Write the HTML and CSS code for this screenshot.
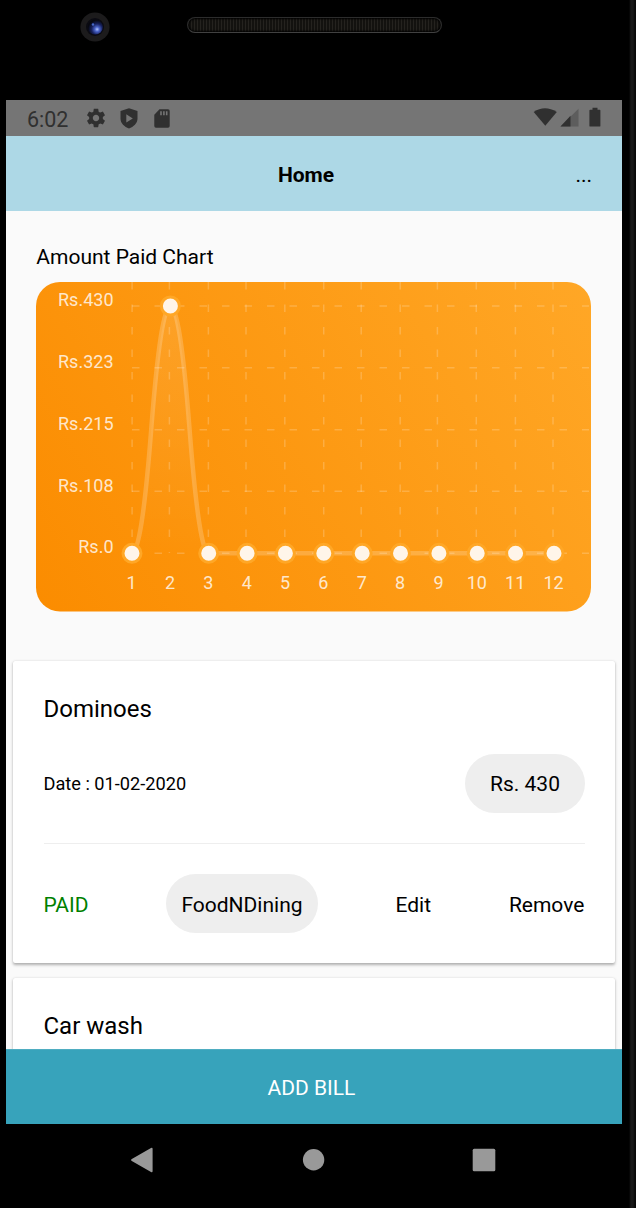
FILE: index.html
```html
<!DOCTYPE html>
<html lang="en">
<head>
<meta charset="utf-8">
<title>Home</title>
<link rel="stylesheet" href="styles.css">
</head>
<body>
<div class="device">
  <header class="bezel">
    <svg class="camera" width="30" height="30" viewBox="0 0 30 30">
      <defs><radialGradient id="lens" cx=".62" cy=".65" r=".6"><stop offset="0" stop-color="#b4c8ff"/><stop offset=".25" stop-color="#4a63c8"/><stop offset=".6" stop-color="#16205c"/><stop offset="1" stop-color="#07080f"/></radialGradient></defs>
      <circle cx="15" cy="15" r="14.6" fill="#1c1b1c"/>
      <circle cx="15" cy="15" r="9" fill="#0b0b12"/>
      <circle cx="15.3" cy="15" r="7.6" fill="url(#lens)"/>
      <circle cx="13" cy="12.5" r="1.2" fill="#4668c8"/>
    </svg>
    <div class="speaker"></div>
  </header>
  <main class="screen">
    <div class="status">
      <span class="clock">6:02</span>
      <svg class="gear" width="22" height="22" viewBox="0 0 24 24"><path d="M19.43 12.98c.04-.32.07-.64.07-.98s-.03-.66-.07-.98l2.11-1.65c.19-.15.24-.42.12-.64l-2-3.46c-.12-.22-.39-.3-.61-.22l-2.49 1c-.52-.4-1.08-.73-1.69-.98l-.38-2.65C14.46 2.18 14.25 2 14 2h-4c-.25 0-.46.18-.49.42l-.38 2.65c-.61.25-1.17.59-1.69.98l-2.49-1c-.23-.09-.49 0-.61.22l-2 3.46c-.13.22-.07.49.12.64l2.11 1.65c-.04.32-.07.65-.07.98s.03.66.07.98l-2.11 1.65c-.19.15-.24.42-.12.64l2 3.46c.12.22.39.3.61.22l2.49-1c.52.4 1.08.73 1.69.98l.38 2.65c.03.24.24.42.49.42h4c.25 0 .46-.18.49-.42l.38-2.65c.61-.25 1.17-.59 1.69-.98l2.49 1c.23.09.49 0 .61-.22l2-3.46c.12-.22.07-.49-.12-.64l-2.11-1.65zM12 15.5c-1.93 0-3.5-1.57-3.5-3.5s1.57-3.5 3.5-3.5 3.5 1.57 3.5 3.5-1.57 3.5-3.5 3.5z"/></svg>
      <svg class="shield" width="18" height="21" viewBox="0 0 18 21"><path fill-rule="evenodd" d="M9 .3 17.5 3v7.8c0 4.400-3.900 8-8.500 9.800C4.400 18.800.5 15.200.5 10.800V3zM6.300 6.300v8.200l6.500-4.100z"/></svg>
      <svg class="card-icon" width="16" height="19" viewBox="0 0 16 19"><path fill-rule="evenodd" d="M5.500.3H14a1.700 1.700 0 0 1 1.700 1.700v15A1.700 1.700 0 0 1 14 18.700H2A1.700 1.700 0 0 1 .3 17V5.700zM6.200 2.200v4h1.600v-4zm2.900 0v4h1.600v-4zm2.800 0v4h1.600v-4z"/></svg>
      <svg class="signals" width="69" height="22" viewBox="0 0 69 22">
        <path d="M.7 5Q11.700-2.500 23.800 5L12.300 18.700z"/>
        <path opacity=".35" d="M45.500 1.700v17.800h-18z"/><path d="M37.500 8.800v10.700h-10z"/>
        <path d="M59.500.7h5v2h2.100q.8 0 .8.800v15.200q0 .9-.8.900h-9.400q-.8 0-.8-.9V3.500q0-.8.8-.8h2.300z"/>
      </svg>
    </div>
    <nav class="appbar"><span class="title">Home</span><span class="more">...</span></nav>
    <div class="content">
      <h2 class="chart-title">Amount Paid Chart</h2>
      <svg class="chart" width="555" height="330" viewBox="36 282 555 330">
        <defs>
          <linearGradient id="bg" gradientUnits="userSpaceOnUse" x1="36" y1="612" x2="591" y2="282"><stop offset="0" stop-color="#fb8c00"/><stop offset="1" stop-color="#ffa726"/></linearGradient>
          <linearGradient id="area" x1="0" y1="0" x2="0" y2="1"><stop offset="0" stop-color="#fff" stop-opacity=".1"/><stop offset="1" stop-color="#fff" stop-opacity="0"/></linearGradient>
        </defs>
        <rect x="36" y="282" width="555" height="329.500" rx="24" fill="url(#bg)"/>
        <path class="grid" d="M132 306H589M132 367.700H589M132 429.700H589M132 491.300H589M132 553.300H589"/>
        <path class="grid" d="M132.100 282V553M169.400 282V553M208.400 282V553M246 282V553M284.800 282V553M323.700 282V553M361.200 282V553M400.200 282V553M437.400 282V553M476.300 282V553M515.400 282V553M553 282V553"/>
        <path fill="url(#area)" d="M132 553.300Q141.600 553.300 151.200 429.700Q160.800 306 170.400 306Q180 306 189.600 429.700Q199.200 553.300 208.700 553.300z"/>
        <path class="line" d="M132 553.300Q141.600 553.300 151.200 429.700Q160.800 306 170.400 306Q180 306 189.600 429.700Q199.200 553.300 208.700 553.300H554"/>
        <g class="dots">
          <circle cx="132" cy="553.300" r="9"/><circle cx="170.400" cy="306" r="9"/><circle cx="208.700" cy="553.300" r="9"/><circle cx="247.100" cy="553.300" r="9"/><circle cx="285.400" cy="553.300" r="9"/><circle cx="323.800" cy="553.300" r="9"/><circle cx="362.200" cy="553.300" r="9"/><circle cx="400.500" cy="553.300" r="9"/><circle cx="438.900" cy="553.300" r="9"/><circle cx="477.200" cy="553.300" r="9"/><circle cx="515.600" cy="553.300" r="9"/><circle cx="554" cy="553.300" r="9"/>
        </g>
        <g class="ylabels"><text x="113.500" y="306">Rs.430</text><text x="113.500" y="367.800">Rs.323</text><text x="113.500" y="429.700">Rs.215</text><text x="113.500" y="491.600">Rs.108</text><text x="113.500" y="553">Rs.0</text></g>
        <g class="xlabels"><text x="131.500" y="589">1</text><text x="170" y="589">2</text><text x="208.300" y="589">3</text><text x="246.700" y="589">4</text><text x="285" y="589">5</text><text x="323.400" y="589">6</text><text x="361.800" y="589">7</text><text x="400.100" y="589">8</text><text x="438.500" y="589">9</text><text x="476.800" y="589">10</text><text x="515.200" y="589">11</text><text x="553.600" y="589">12</text></g>
      </svg>
      <article class="bill">
        <h3 class="bill-name">Dominoes</h3>
        <div class="bill-info"><span class="date">Date : 01-02-2020</span><span class="chip amount">Rs. 430</span></div>
        <div class="actions"><span class="paid">PAID</span><span class="chip">FoodNDining</span><span>Edit</span><span>Remove</span></div>
      </article>
      <article class="bill">
        <h3 class="bill-name">Car wash</h3>
      </article>
    </div>
    <div class="add">ADD BILL</div>
  </main>
  <footer class="navbar">
    <svg width="636" height="84" viewBox="0 0 636 84"><path d="M131.800 35 151 24.100q1.600-.9 1.600.9v22q0 1.800-1.600.9L131.800 37q-1.800-1 0-2z"/><circle cx="313.600" cy="35.800" r="10.700"/><rect x="472.700" y="24.700" width="22.600" height="22.600" rx="1.500"/></svg>
  </footer>
</div>
</body>
</html>
```
FILE: styles.css
```css
* { box-sizing: border-box; margin: 0; }
body { background: #000; font-family: Roboto, "Liberation Sans", sans-serif; color: #000; overflow: hidden; }
.device { width: 636px; height: 1208px; display: flex; flex-direction: column; background: linear-gradient(90deg, transparent 629px, #181818 631px, #181818 633px, #080808 635px) #000; }
.bezel { height: 100px; display: flex; padding: 12px 0 0 80px; gap: 77px; align-items: flex-start; flex: none; }
.speaker { width: 255px; height: 16px; margin-top: 5px; border-radius: 8px; border: 1.500px solid #2c2c2c; border-bottom-color: #414141; background: repeating-linear-gradient(90deg, #25231f 0 1px, #13120f 1px 3px); box-shadow: inset 0 0 2px 1px #000; }
.screen { width: 616px; height: 1024px; margin-left: 6px; background: #fafafa; display: flex; flex-direction: column; flex: none; overflow: hidden; }
.status { height: 36px; flex: none; background: #757575; display: flex; align-items: center; padding: 0 20.500px 0 21px; color: #303030; fill: #303030; }
.clock { width: 58px; font-size: 21.5px; line-height: 36px; padding-top: 3px; }
.shield { margin-left: 12.500px; }
.card-icon { margin-left: 16.500px; }
.signals { margin-left: auto; }
.appbar { height: 75px; flex: none; background: #add8e6; display: grid; grid-template-columns: 1fr auto 1fr; align-items: center; padding: 2px 30px 0 14px; font-size: 21px; }
.title { grid-column: 2; font-weight: 700; }
.more { grid-column: 3; justify-self: end; padding-top: 1px; }
.content { height: 838px; flex: none; overflow: hidden; padding: 30px 7px 0; }
.chart-title { font-size: 21px; line-height: 32px; font-weight: 400; margin-left: 23.300px; height: 41px; }
.chart { display: block; margin: 0 0 49px 23px; }
.grid { fill: none; stroke: #fff; stroke-opacity: .2; stroke-width: 1.5; stroke-dasharray: 7.5 15; }
.line { fill: none; stroke: #fff; stroke-opacity: .2; stroke-width: 4.5; }
.dots { fill: #fff5e9; stroke: #ffa726; stroke-width: 3; }
.ylabels, .xlabels { fill: #fff; fill-opacity: .8; font-size: 18px; }
.ylabels { text-anchor: end; }
.xlabels { text-anchor: middle; }
.bill { width: 602px; height: 302px; margin-bottom: 15px; padding: 30px 30px 0 30.500px; background: #fff; border-radius: 2px; box-shadow: 0 1.500px 3px rgba(0,0,0,.3), 0 0 1px rgba(0,0,0,.08); }
.bill-name { font-size: 24px; line-height: 36px; font-weight: 400; }
.bill-info { height: 117px; display: flex; justify-content: space-between; align-items: flex-start; padding-top: 27px; border-bottom: 1.500px solid #eee; }
.date { font-size: 18.200px; line-height: 60px; }
.chip { background: #eee; border-radius: 30px; height: 59px; line-height: 60px; padding: 0 15px; }
.amount { width: 120px; text-align: center; font-size: 21px; }
.actions { display: flex; justify-content: space-between; padding: 30px .6px 0 0; font-size: 21px; line-height: 62px; }
.actions .chip { line-height: 62px; }
.paid { color: #008000; }
.add { height: 75px; flex: none; background: #37a3bb; border-top: 1px solid #4fadc1; color: #fff; font-size: 21px; line-height: 76px; text-align: center; padding-right: 5px; }
.navbar { height: 84px; fill: #999; }
.navbar svg { display: block; }
```
